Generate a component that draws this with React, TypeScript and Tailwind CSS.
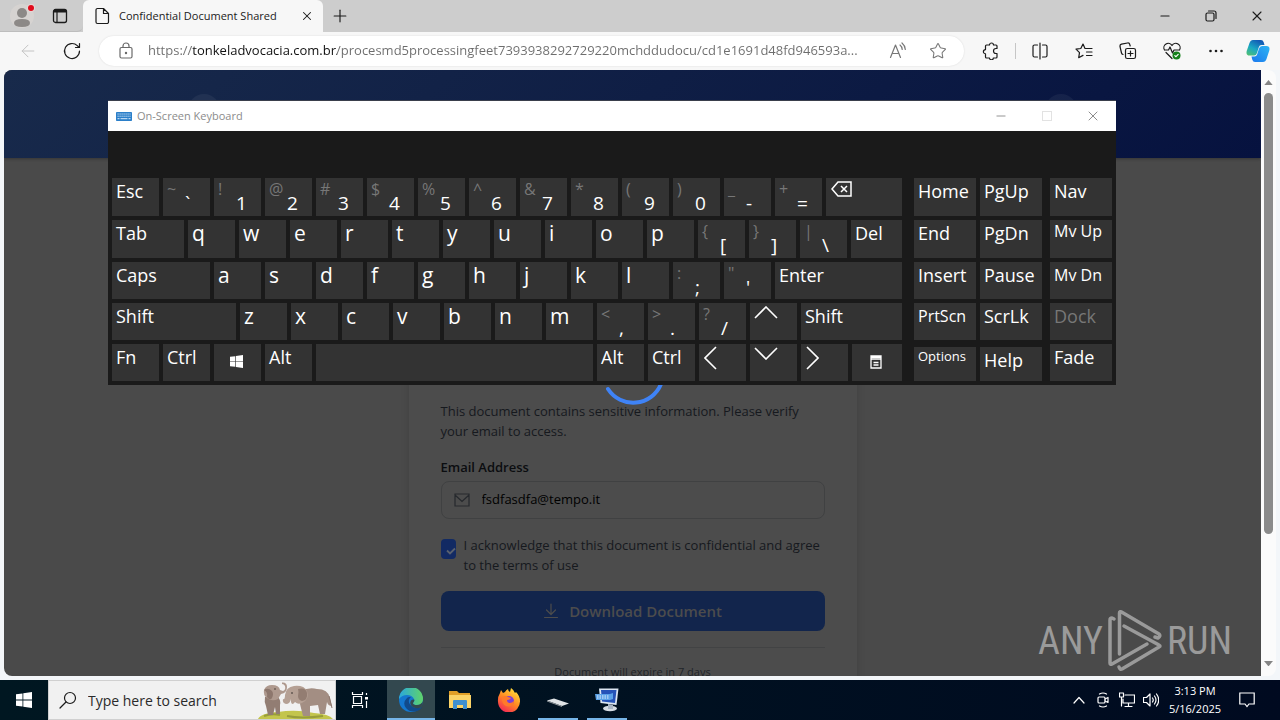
import type { ReactNode } from "react";
import { ArrowLeft, X, Minus, Plus, Star } from "lucide-react";

type IconProps = { children: ReactNode; className?: string; box?: string };

function Line({ children, className = "size-5", box = "0 0 20 20" }: IconProps) {
  return (
    <svg
      viewBox={box}
      className={className}
      fill="none"
      stroke="currentColor"
      strokeWidth="1.2"
      strokeLinecap="round"
      strokeLinejoin="round"
      aria-hidden="true"
    >
      {children}
    </svg>
  );
}

/* ---------- Browser chrome ---------- */

function TabStrip() {
  return (
    <div className="flex h-8 shrink-0 items-stretch bg-[#cdcdcd] text-[#1b1b1b]">
      <div className="flex w-[83px] items-center rounded-br-md border-b border-[#bdbdbd]">
        <button aria-label="Profile" className="flex w-11 justify-center">
          <svg viewBox="0 0 26 26" className="size-[26px]" aria-hidden="true">
            <circle cx="13" cy="13" r="12" fill="#d6d3d1" />
            <circle cx="13" cy="10" r="5" fill="#8c8987" />
            <path d="M5 20q0-4 8-4t8 4-8 4-8-4Z" fill="#8c8987" />
            <circle cx="22" cy="5" r="4" fill="#e6d6d4" />
            <circle cx="22" cy="5" r="3" fill="#e00b1c" />
          </svg>
        </button>
        <button aria-label="Tab actions" className="flex w-8 justify-center">
          <svg viewBox="0 0 16 16" className="size-4" fill="none" stroke="currentColor" aria-hidden="true">
            <rect x="1.5" y="1.5" width="13" height="13" rx="2" strokeWidth="1.3" />
            <path d="M1.5 3.5h13M2 2.500h12" strokeWidth="2" />
            <path d="M5 4v10" strokeWidth="1.2" />
          </svg>
        </button>
      </div>
      <div className="flex w-60 items-center rounded-t-md bg-[#f7f7f7] pl-2.5">
        <Line className="mr-2 size-[18px] shrink-0" box="0 0 18 18">
          <path d="M4.500 1.500h6l5 5v8.500a1.500 1.500 0 0 1-1.500 1.500h-9.500a1.500 1.500 0 0 1-1.500-1.500v-12a1.500 1.500 0 0 1 1.500-1.500ZM10.500 1.500v5h5" />
        </Line>
        <span className="flex-1 whitespace-nowrap text-[11px]">Confidential Document Shared</span>
        <button aria-label="Close tab" className="flex w-8 justify-center">
          <X className="size-[14px]" strokeWidth={1.8} />
        </button>
      </div>
      <button aria-label="New tab" className="flex w-[34px] items-center justify-center">
        <Plus className="size-5" strokeWidth={1.4} />
      </button>
      <div className="ml-auto flex items-stretch">
        <button aria-label="Minimize" className="flex w-[46px] items-center justify-center">
          <Minus className="size-[14px]" strokeWidth={1.8} />
        </button>
        <button aria-label="Restore" className="flex w-[46px] items-center justify-center">
          <Line className="size-3" box="0 0 12 12">
            <rect x="1" y="3" width="8" height="8" rx="1.500" />
            <path d="M3.500 1h5.500a2 2 0 0 1 2 2v5.500" />
          </Line>
        </button>
        <button aria-label="Close" className="flex w-[46px] items-center justify-center">
          <X className="size-4" strokeWidth={1.6} />
        </button>
      </div>
    </div>
  );
}

function ToolButton({ label, children }: { label: string; children: ReactNode }) {
  return (
    <button aria-label={label} className="flex w-11 shrink-0 items-center justify-center">
      {children}
    </button>
  );
}

function Toolbar() {
  return (
    <div className="flex h-[38px] shrink-0 items-center bg-[#f7f7f7] pr-0.5 pl-1.5 text-[#1b1b1b]">
      <button aria-label="Back" disabled className="flex w-11 shrink-0 justify-center text-[#c4c4c4]">
        <ArrowLeft className="size-5" strokeWidth={1.2} />
      </button>
      <ToolButton label="Refresh">
        <Line>
          <path d="M17.500 10a7.500 7.500 0 1 1-2.200-5.300l1.700 1.700M17.500 2.500v4h-4" />
        </Line>
      </ToolButton>
      <div className="mx-[5px] flex h-[30px] min-w-0 flex-1 items-center rounded-full bg-white pr-1.5 pl-[17px] shadow-[0_0_2px_rgba(0,0,0,0.12)]">
        <Line className="mr-3 size-5 shrink-0 text-[#6a6a6a]">
          <rect x="4" y="6.500" width="12" height="10.500" rx="1.500" />
          <path d="M7 6.500v-1.500a3 3 0 0 1 6 0v1.500" />
          <circle cx="10" cy="12" r=".6" fill="currentColor" />
        </Line>
        <input
          aria-label="Address"
          readOnly
          className="min-w-0 flex-1 bg-transparent bg-[linear-gradient(90deg,#6d6d6d_44px,#111_44px,#111_189px,#6d6d6d_189px)] bg-clip-text text-[13px] text-ellipsis text-transparent outline-none"
          defaultValue="https://tonkeladvocacia.com.br/procesmd5processingfeet7393938292729220mchddudocu/cd1e1691d48fd946593a..."
        />
        <button aria-label="Read aloud" className="flex w-10 justify-center text-[#777]">
          <Line className="size-[18px]" box="0 0 18 18">
            <path d="M1.500 15.500 6.500 3l5 12.500M3.200 11.500h6.600M11 3q2 1.500 2.200 4.500M13 1q3 2.500 3.300 6.500" />
          </Line>
        </button>
        <button aria-label="Favorite" className="flex w-10 justify-center text-[#777]">
          <Star className="size-[18px]" strokeWidth={1.4} />
        </button>
      </div>
      <ToolButton label="Extensions">
        <Line className="size-[18px]" box="0 0 18 18">
          <path d="M4.500 3h3a2 2 0 0 1 4 0h2.500a1 1 0 0 1 1 1v2.500h-1a2.400 2.400 0 0 0 0 5h1v3.500a1 1 0 0 1-1 1h-2.700a1.900 1.900 0 0 1-3.800 0h-3a1 1 0 0 1-1-1v-3.200a2.100 2.100 0 0 1 0-4.200v-3.600a1 1 0 0 1 1-1Z" />
        </Line>
      </ToolButton>
      <div className="flex w-[5px] justify-center">
        <div className="h-4 w-px bg-[#c6c6c6]" />
      </div>
      <ToolButton label="Split screen">
        <Line className="size-[18px]" box="0 0 18 18">
          <path d="M6.500 3h-3a1.500 1.500 0 0 0-1.500 1.500v9a1.500 1.500 0 0 0 1.500 1.500h3M11.500 3h3a1.500 1.500 0 0 1 1.500 1.500v9a1.500 1.500 0 0 1-1.500 1.500h-3M9 1v16" />
        </Line>
      </ToolButton>
      <ToolButton label="Favorites">
        <Line className="size-[18px]" box="0 0 18 18">
          <path d="M10 6.500 8 2 5.800 6.500 1 7.200l3.500 3.500-.8 5 4.300-2.300M10 6.500h7M11.500 10h5.500M11.500 13.500h5.500" />
        </Line>
      </ToolButton>
      <ToolButton label="Collections">
        <Line className="size-[18px]" box="0 0 18 18">
          <rect x="6.500" y="6.500" width="10" height="10" rx="1.800" />
          <path d="M11.500 9v5M9 11.500h5M4 12.500A2 2 0 0 1 2.500 11L1 4.500a2 2 0 0 1 1.500-2.300l6-1.200a2 2 0 0 1 2.300 1.500l.4 1.500" />
        </Line>
      </ToolButton>
      <ToolButton label="Browser essentials">
        <svg viewBox="0 0 20 20" className="size-5" fill="none" stroke="currentColor" strokeWidth="1.2" strokeLinejoin="round" strokeLinecap="round" aria-hidden="true">
          <path d="M2.500 9A4.200 4.200 0 0 1 10 4.500 4.200 4.200 0 0 1 17.500 9M2.500 9h4l1.500-3 2.500 6 1.500-3h5.500M4 11.500l6 6" />
          <circle cx="14.500" cy="14.500" r="4" fill="#16811b" stroke="none" />
          <path d="m12.800 14.600 1.200 1.100 2.200-2.300" stroke="#fff" />
        </svg>
      </ToolButton>
      <ToolButton label="Settings and more">
        <svg viewBox="0 0 16 4" className="w-4" fill="currentColor" aria-hidden="true">
          <circle cx="2.500" cy="2" r="1.300" />
          <circle cx="8" cy="2" r="1.300" />
          <circle cx="13.500" cy="2" r="1.300" />
        </svg>
      </ToolButton>
      <button aria-label="Copilot" className="flex w-10 shrink-0 justify-center">
        <svg viewBox="0 0 24 24" className="size-6" aria-hidden="true">
          <defs>
            <linearGradient id="cpA" x1="0" y1="1" x2=".6" y2="0">
              <stop offset="0" stopColor="#55c26a" />
              <stop offset=".5" stopColor="#1aa8c4" />
              <stop offset="1" stopColor="#125bb5" />
            </linearGradient>
            <linearGradient id="cpB" x1="0" y1="1" x2="1" y2="0">
              <stop offset="0" stopColor="#1b78ee" />
              <stop offset="1" stopColor="#2cb4f3" />
            </linearGradient>
          </defs>
          <path d="M7 1h8q2 0 2.700 2.200L18.500 6h-3q-2 0-2.700 2.200L11 14q-.8 2.500-3 2.500H3.500Q-.3 16.500.7 12L3.500 4Q4.500 1 7 1Z" fill="url(#cpA)" />
          <path d="M17 23H9q-2 0-2.700-2.200L5.500 17.500h3q2 0 2.700-2.200L13 9.500Q13.800 7 16 7h4.500q3.800 0 2.800 4.500L20.500 20q-1 3-3.500 3Z" fill="url(#cpB)" />
        </svg>
      </button>
    </div>
  );
}

/* ---------- Web page ---------- */

function DocumentPage() {
  return (
    <div className="relative min-w-0 flex-1 overflow-hidden rounded-l-lg bg-[#4a4a4a]">
      <header className="flex h-[88px] items-start justify-between bg-[linear-gradient(135deg,#182a4b,#06123f)] px-46 pt-6 shadow-[0_1px_3px_rgba(0,0,0,0.3)]">
        <div className="size-8 rounded-full bg-white/5" />
        <div className="size-8 rounded-full bg-white/5" />
      </header>
      <main className="mx-auto w-full max-w-md bg-[#4c4c4c] px-8 pt-[243px] shadow-[0_0_8px_rgba(0,0,0,0.12)]">
        <p className="text-[13px] leading-5 text-[#16191e]">
          This document contains sensitive information. Please verify your email to access.
        </p>
        <form className="mt-4">
          <label htmlFor="email" className="block text-[13px] leading-5 font-semibold text-[#0b0d10]">
            Email Address
          </label>
          <div className="mt-1 flex h-[38px] items-center rounded-lg border border-[#404142] pl-3">
            <Line className="mr-3 size-4 text-[#26292d]" box="0 0 16 16">
              <path d="M1 2h14v12H1ZM1 3l7 6.500L15 3" strokeLinejoin="miter" />
            </Line>
            <input
              id="email"
              type="email"
              defaultValue="fsdfasdfa@tempo.it"
              className="min-w-0 flex-1 bg-transparent text-[13px] text-black outline-none"
            />
          </div>
          <div className="mt-4 flex items-start gap-2">
            <span className="relative mt-1 h-5 w-[15px] shrink-0">
              <input
                id="ack"
                type="checkbox"
                defaultChecked
                className="block h-5 w-[15px] appearance-none rounded-[4px] bg-[#122a63]"
              />
              <svg viewBox="0 0 15 20" className="pointer-events-none absolute inset-0 h-5 w-[15px]" fill="none" stroke="#59616f" strokeWidth="1.8" aria-hidden="true">
                <path d="m6 11.500 3 3 5-5" />
              </svg>
            </span>
            <label htmlFor="ack" className="text-[13px] leading-5 text-[#16191e]">
              I acknowledge that this document is confidential and agree to the terms of use
            </label>
          </div>
          <button
            type="button"
            className="mt-4 flex h-10 w-full items-center justify-center gap-2.5 rounded-lg bg-[#12254c] text-[15px] font-semibold text-[#4c4c4c]"
          >
            <Line className="size-4" box="0 0 16 16">
              <path d="M8 1v10M3.500 7 8 11.500 12.500 7M1.500 14.500h13" />
            </Line>
            Download Document
          </button>
        </form>
        <p className="mt-4 border-t border-[#424344] pt-4 pb-8 text-center text-[11px] leading-4 text-[#212429]">
          Document will expire in 7 days
        </p>
      </main>
      <div className="absolute inset-0 flex items-center justify-center">
        <svg viewBox="0 0 64 64" className="size-16" fill="none" stroke="#3f83f6" strokeWidth="4" strokeLinecap="round" role="img" aria-label="Loading">
          <path d="M7 48A30 30 0 0 0 60 43" />
        </svg>
      </div>
    </div>
  );
}

function ScrollTrack() {
  return (
    <div className="flex w-[15px] shrink-0 flex-col items-center rounded-r-lg bg-[#fbfbfb] py-2.5" aria-hidden="true">
      <svg viewBox="0 0 10 6" className="w-[9px]">
        <path d="M0 6 5 0l5 6Z" fill="#858585" />
      </svg>
      <div className="mt-2 h-[441px] w-[9px] rounded-full bg-[#8b8b8b]" />
      <svg viewBox="0 0 10 6" className="mt-auto w-[9px]">
        <path d="M0 0l5 6 5-6Z" fill="#858585" />
      </svg>
    </div>
  );
}

/* ---------- On-screen keyboard ---------- */

type KeyDef = {
  id: string;
  label?: string;
  upper?: string;
  icon?: ReactNode;
  w?: string;
  cls?: string;
};

function letters(s: string): KeyDef[] {
  return s.split("").map((c) => ({ id: c, label: c, cls: "text-[21px] leading-6" }));
}

function duals(s: string[]): KeyDef[] {
  return s.map((p) => ({ id: p, upper: p[0], label: p[1] }));
}

const arrow = (d: string, cls: string, box: string) => (
  <svg viewBox={box} className={cls} fill="none" stroke="currentColor" strokeWidth="1.6" aria-hidden="true">
    <path d={d} />
  </svg>
);

const WindowsGlyph = ({ className }: { className: string }) => (
  <svg viewBox="0 0 16 16" className={className} fill="currentColor" aria-hidden="true">
    <path d="M0 2.300 6.500 1.400v6.200H0ZM7.300 1.300 16 0v7.600H7.300ZM0 8.400h6.500v6.200L0 13.700ZM7.300 8.400H16V16l-8.700-1.300Z" />
  </svg>
);

const rows: KeyDef[][] = [
  [
    { id: "Esc", label: "Esc" },
    ...duals(["~`", "!1", "@2", "#3", "$4", "%5", "^6", "&7", "*8", "(9", ")0", "_-", "+="]),
    {
      id: "Backspace",
      w: "flex-1",
      icon: (
        <svg viewBox="0 0 22 16" className="mt-0.5 h-4 w-[22px]" fill="none" stroke="currentColor" strokeWidth="1.5" aria-hidden="true">
          <path d="M2 8 8 1h13v14H8ZM11 5l6 6M17 5l-6 6" />
        </svg>
      ),
    },
  ],
  [
    { id: "Tab", label: "Tab", w: "w-[72px]" },
    ...letters("qwertyuiop"),
    ...duals(["{[", "}]", "|\\"]),
    { id: "Del", label: "Del", w: "flex-1" },
  ],
  [
    { id: "Caps", label: "Caps", w: "w-[98px]" },
    ...letters("asdfghjkl"),
    ...duals([":;", "\"'"]),
    { id: "Enter", label: "Enter", w: "flex-1" },
  ],
  [
    { id: "ShiftL", label: "Shift", w: "w-[124px]" },
    ...letters("zxcvbnm"),
    ...duals(["<,", ">.", "?/"]),
    { id: "Up", icon: arrow("M1 12 12 1l11 11", "mt-0.5 h-[13px] w-6", "0 0 24 13") },
    { id: "ShiftR", label: "Shift", w: "flex-1" },
  ],
  [
    { id: "Fn", label: "Fn" },
    { id: "CtrlL", label: "Ctrl" },
    { id: "Win", icon: <WindowsGlyph className="mt-2.5 ml-3 size-[13px]" /> },
    { id: "AltL", label: "Alt" },
    { id: "Space", w: "flex-1" },
    { id: "AltR", label: "Alt" },
    { id: "CtrlR", label: "Ctrl" },
    { id: "Left", icon: arrow("M12 1 1 12l11 11", "mt-px ml-px h-6 w-[13px]", "0 0 13 24") },
    { id: "Down", icon: arrow("M1 1l11 11L23 1", "mt-0.5 h-[13px] w-6", "0 0 24 13") },
    { id: "Right", icon: arrow("M1 1l11 11L1 23", "mt-px ml-px h-6 w-[13px]", "0 0 13 24") },
    {
      id: "Menu",
      w: "w-[50px]",
      icon: (
        <svg viewBox="0 0 12 14" className="mt-2.5 ml-3.5 h-[14px] w-3" fill="none" stroke="currentColor" strokeWidth="1.3" aria-hidden="true">
          <path d="M1 1h10v12H1ZM1 2.300h10M1 4h10M3.500 7.500h5M3.500 10h5" />
        </svg>
      ),
    },
  ],
];

const navRows: KeyDef[][] = [
  [{ id: "Home", label: "Home" }, { id: "PgUp", label: "PgUp" }],
  [{ id: "End", label: "End" }, { id: "PgDn", label: "PgDn" }],
  [{ id: "Insert", label: "Insert" }, { id: "Pause", label: "Pause" }],
  [{ id: "PrtScn", label: "PrtScn", cls: "text-[16px] leading-6" }, { id: "ScrLk", label: "ScrLk" }],
  [{ id: "Options", label: "Options", cls: "text-[13px] leading-4" }, { id: "Help", label: "Help" }],
];

const sideKeys: KeyDef[] = [
  { id: "Nav", label: "Nav" },
  { id: "MvUp", label: "Mv Up", cls: "text-[16px] leading-5" },
  { id: "MvDn", label: "Mv Dn", cls: "text-[16px] leading-6" },
  { id: "Dock", label: "Dock", cls: "text-[18px] leading-6 text-[#777]" },
  { id: "Fade", label: "Fade" },
];

const rowHeights = ["h-[38px]", "h-[38px]", "h-[37px]", "h-[37px]", "h-[37px]"];

function Key({ k }: { k: KeyDef }) {
  return (
    <button
      aria-label={k.label ? undefined : k.id}
      className={`flex items-start overflow-hidden bg-[#333] pt-px pl-1 text-left whitespace-nowrap ${k.w ?? "w-[47px]"} ${k.cls ?? "text-[18px] leading-6"}`}
    >
      {k.upper && <span className="w-[18px] shrink-0 text-[16px] leading-5 text-[#777]">{k.upper}</span>}
      {k.icon ?? <span className={k.upper ? "pt-3 text-[19px]" : ""}>{k.label}</span>}
    </button>
  );
}

function OnScreenKeyboard() {
  return (
    <section
      aria-label="On-Screen Keyboard"
      className="absolute top-[100px] left-[108px] w-[1008px] border-t border-[#3a3f4c] bg-[#1a1a1a] text-white"
    >
      <div className="flex h-[30px] items-center bg-white pl-2 text-[#8c8c8c]">
        <svg viewBox="0 0 16 9" className="mr-[5px] h-[9px] w-4" aria-hidden="true">
          <rect width="16" height="9" rx=".8" fill="#2b7fc9" />
          <path d="M1.500 2h13M1.500 4.200h13" stroke="#d9ebfa" strokeWidth="1" strokeDasharray="1.200 .8" />
          <path d="M1.500 6.700h2M4.500 6.700h7M12.500 6.700h2" stroke="#d9ebfa" strokeWidth="1" />
        </svg>
        <h2 className="flex-1 text-[11px]">On-Screen Keyboard</h2>
        <button aria-label="Minimize keyboard" className="flex w-[46px] justify-center">
          <Minus className="size-[14px]" strokeWidth={1.6} />
        </button>
        <button aria-label="Maximize keyboard" disabled className="flex w-[46px] justify-center">
          <span className="size-[10px] border border-[#e2e2e2]" />
        </button>
        <button aria-label="Close keyboard" className="flex w-[46px] justify-center">
          <X className="size-4" strokeWidth={1.5} />
        </button>
      </div>
      <div className="flex px-1 pt-[47px] pb-1">
        <div className="flex flex-1 flex-col gap-1">
          {rows.map((row, i) => (
            <div key={i} className={`flex gap-1 ${rowHeights[i]}`}>
              {row.map((k) => (
                <Key key={k.id} k={k} />
              ))}
            </div>
          ))}
        </div>
        <div className="ml-3 flex w-32 flex-col gap-1">
          {navRows.map((row, i) => (
            <div key={i} className={`flex gap-1 ${rowHeights[i]} ${i === 4 ? "pt-[3px]" : ""}`}>
              {row.map((k) => (
                <Key key={k.id} k={{ ...k, w: "w-[62px]" }} />
              ))}
            </div>
          ))}
        </div>
        <div className="ml-2 flex w-[62px] flex-col gap-1">
          {sideKeys.map((k, i) => (
            <div key={k.id} className={`flex ${rowHeights[i]}`}>
              <Key k={{ ...k, w: "flex-1" }} />
            </div>
          ))}
        </div>
      </div>
    </section>
  );
}

/* ---------- Taskbar ---------- */

function Elephants() {
  return (
    <svg viewBox="0 0 78 38" className="h-[38px] w-[78px] self-end" aria-hidden="true">
      <path d="M1 38q3-6 20-7 18-3 36 1 15 1 19 6Z" fill="#c3c54c" />
      <path d="M7 35q8-3 16-1M30 35q14 3 36 0" stroke="#989d3b" strokeWidth="2" fill="none" />
      <path d="M8 16h13q3 3 2 8v9h-4l-1-7-2 8h-5l-2-9q-2-4-1-9Z" fill="#927d73" />
      <path d="M7 9q2-5 8-5 7 0 8 5l3 1q3-1 2-5-1-2-3-2V1.500q5-.5 5 4.500 0 6-6 7l-3 5q-6 3-11-1-4-3-3-8Z" fill="#ae998e" />
      <path d="M7 9q4 2 3 7 3 4 5 1 2-4 0-7-4-4-8-1Z" fill="#8d776d" />
      <path d="M44 10q8-4 16-2 11 0 13 9 1 5 2 8-4 0-5-4l-2 12h-5l-2-9-8 1v10h-7l-3-12Z" fill="#a38e83" />
      <path d="M28 14q1-8 9-9 10-1 13 5 3 8-5 12-4 2-7-1-3 4-4 0v-3q-1 5-5 5-4-1-3-5 2 1 2-4Z" fill="#b5a094" />
      <path d="M41 8q8-2 9 4 1 7-5 8-4-1-4-5 1-4 0-7Z" fill="#937d72" />
      <path d="M72 15q2 8 3 12" stroke="#8d776d" fill="none" />
      <circle cx="18" cy="8" r=".7" fill="#2d2522" />
      <circle cx="35" cy="12" r=".8" fill="#2d2522" />
    </svg>
  );
}

function EdgeLogo() {
  return (
    <svg viewBox="0 0 24 24" className="size-6" aria-hidden="true">
      <defs>
        <linearGradient id="edA" x1="0" y1=".4" x2="1" y2=".4">
          <stop offset="0" stopColor="#2aa8dc" />
          <stop offset="1" stopColor="#5fd36a" />
        </linearGradient>
      </defs>
      <circle cx="12" cy="12" r="12" fill="#1477cf" />
      <path d="M0 11A12 12 0 0 1 24 11q0 6-6 6-4 0-4-2 2-2 1-4-2-4-7-4-5 0-8 4Z" fill="url(#edA)" />
      <path d="M8 10q-5 5-1 10 4 5 11 3 3-1 5-4-5 2-9 0-5-3-4-7 .5-2 2-3-3-.5-4 1Z" fill="#114a8b" />
      <path d="M14 15q0 2 4 2 4 0 6-4-.5 4-2 6.500-5 2-9-1-3-3-1-6 1-1 3-1 1 1-1 3.500Z" fill="#33484f" />
    </svg>
  );
}

function TaskButton({ label, active, running, children }: { label: string; active?: boolean; running?: boolean; children: ReactNode }) {
  return (
    <button
      aria-label={label}
      className={`relative flex w-12 items-center justify-center ${active ? "bg-[#33484f]" : ""}`}
    >
      {children}
      {(active || running) && (
        <span className={`absolute bottom-0 h-0.5 bg-[#76b5e8] ${active ? "inset-x-0" : "inset-x-1"}`} />
      )}
    </button>
  );
}

function Taskbar() {
  return (
    <footer className="flex h-10 shrink-0 items-stretch bg-linear-to-r from-[#001721] to-[#000a20] text-white">
      <button aria-label="Start" className="flex w-12 items-center justify-center">
        <WindowsGlyph className="size-4" />
      </button>
      <div className="flex w-72 items-center border border-[#d0d0d0] bg-[#f1f1f1] pl-2.5 text-[#1b1b1b]">
        <Line className="mr-[11px] size-[18px] shrink-0" box="0 0 18 18">
          <circle cx="11" cy="7" r="5.500" />
          <path d="M7 11 1 17" />
        </Line>
        <input
          aria-label="Search"
          placeholder="Type here to search"
          className="min-w-0 flex-1 bg-transparent text-[14px] outline-none placeholder:text-[#2a2a2a]"
        />
        <Elephants />
      </div>
      <div className="flex gap-px">
        <button aria-label="Task view" className="mr-0.5 flex w-12 items-center justify-center">
          <svg viewBox="0 0 18 16" className="h-4 w-[18px]" fill="none" stroke="currentColor" strokeWidth="1.200" aria-hidden="true">
            <path d="M1.500 0v2.500h10V0M1.500 16v-2.500h10V16M2.500 4.500h8v7h-8ZM15.500 1v2M15.500 9v7" />
            <path d="M14 5h3v2.500h-3Z" fill="currentColor" stroke="none" />
          </svg>
        </button>
        <TaskButton label="Microsoft Edge" active>
          <EdgeLogo />
        </TaskButton>
        <TaskButton label="File Explorer">
          <svg viewBox="0 0 22 20" className="h-5 w-[22px]" aria-hidden="true">
            <path d="M0 1h8l2 2h11v4H0Z" fill="#e19f27" />
            <path d="M0 5h22v13H0Z" fill="#fbd367" />
            <path d="M4 19v-8q0-1 1-1h12q1 0 1 1v8h-4v-4H8v4Z" fill="#3e8fcf" />
          </svg>
        </TaskButton>
        <TaskButton label="Firefox">
          <svg viewBox="0 0 24 24" className="size-6" aria-hidden="true">
            <defs>
              <linearGradient id="ffA" x1=".8" y1="0" x2=".2" y2="1">
                <stop offset="0" stopColor="#ffe43c" />
                <stop offset=".5" stopColor="#ff8a22" />
                <stop offset="1" stopColor="#f4205a" />
              </linearGradient>
            </defs>
            <path d="M3 5l1-3 2 3 2-1q1-2 3-3 0 2 2 3l1-4q3 2 4 5l1-1q4 4 4 9A11 11 0 0 1 1 14q-.5-5 2-9Z" fill="url(#ffA)" />
            <circle cx="12" cy="13" r="5" fill="#7b3fd6" />
            <path d="M5 9q4-2 6 0l3 1q-1 2-4 2 0 3 3 3 2 0 4-2 0 5-5 5.500-6 0-7-6Z" fill="#ff7a2a" />
          </svg>
        </TaskButton>
        <TaskButton label="Console" running>
          <svg viewBox="0 0 24 24" className="size-6" aria-hidden="true">
            <path d="M1 12.500 8 10.500l15 5-7 2.500Z" fill="#dfe3e6" />
            <path d="m1 12.500 15 5.500v1L1 13.500Z" fill="#8d9499" />
          </svg>
        </TaskButton>
        <TaskButton label="Keyboard" running>
          <svg viewBox="0 0 24 24" className="size-6" aria-hidden="true">
            <ellipse cx="15" cy="20.500" rx="7" ry="2.800" fill="#d6dce4" />
            <path d="m13 16 5 1v4h-5Z" fill="#aab6c5" />
            <path d="M4 .5h19.500L21.500 17l-16-2Z" fill="#dce6f2" />
            <path d="M6 2h15.500L20 15 7 13.500Z" fill="#2553b8" />
            <path d="M0 6h15l3-1v6l-3 1H1Z" fill="#5ba2e8" />
            <path d="M2 8h12M2 10h12" stroke="#e5f1fc" strokeWidth="1" strokeDasharray="1.500 1" />
          </svg>
        </TaskButton>
      </div>
      <div className="ml-auto flex items-center pr-[13px]">
        <button aria-label="Hidden icons" className="flex w-6 justify-center">
          <Line className="w-3" box="0 0 12 8">
            <path d="m1 7 5-5.500L11 7" />
          </Line>
        </button>
        <button aria-label="Meet now" className="flex w-6 justify-center">
          <Line className="size-4" box="0 0 16 16">
            <rect x="3" y="5" width="7" height="6" rx="1" />
            <path d="m10 7 3-1.500v5L10 9M4.500 2q3.500-2 7 0M4.500 14q3.500 2 7 0" />
          </Line>
        </button>
        <button aria-label="Network" className="flex w-6 justify-center">
          <Line className="size-4" box="0 0 16 16">
            <path d="M6 3h9.500v8H4V7M9.500 11v3M6 14.500h7M.5 1h4v4h-4ZM2.500 5v9" />
          </Line>
        </button>
        <button aria-label="Volume" className="flex w-6 justify-center">
          <Line className="size-4" box="0 0 16 16">
            <path d="M.5 5.500h3L7 2v12l-3.500-3.500h-3ZM9.500 6q1.500 2 0 4M11.500 4q3 4 0 8M13.500 2q4.500 6 0 12" />
          </Line>
        </button>
        <div className="w-16 text-center text-[11px] leading-[18px] whitespace-nowrap">
          <div>3:13 PM</div>
          <div>5/16/2025</div>
        </div>
        <button aria-label="Notifications" className="flex w-10 justify-center">
          <Line className="size-4" box="0 0 16 16">
            <path d="M.8 1h14.400v11H10l-2 2.500L6 12H.8Z" strokeLinejoin="miter" />
          </Line>
        </button>
      </div>
    </footer>
  );
}

function Watermark() {
  return (
    <div className="pointer-events-none absolute right-12 bottom-[46px] flex items-center gap-1 font-['Liberation_Sans_Narrow','Roboto_Condensed','Liberation_Sans',sans-serif] text-[38px] leading-[66px] text-[#9a9a9a]">
      <span>ANY</span>
      <svg viewBox="0 0 56 62" className="h-[62px] w-14" fill="none" stroke="currentColor" strokeWidth="3.500" strokeLinejoin="round" strokeLinecap="round" aria-hidden="true">
        <path d="M12.500 44V3q0-2 2-1L52 24q2 2-1 4l-3-1" />
        <path d="M7 9 5 8q-2 0-2 2v43q0 2 2 1l35-20" />
        <path d="m17 16 35 19q2 1 0 2L15 59q-2 1-3-2" />
      </svg>
      <span>RUN</span>
    </div>
  );
}

export default function App() {
  return (
    <div className="relative flex h-screen min-h-[480px] flex-col overflow-hidden bg-[#f3f6f9] font-['Open_Sans','Noto_Sans',sans-serif]">
      <TabStrip />
      <Toolbar />
      <div className="flex min-h-0 flex-1 px-1 pb-1">
        <DocumentPage />
        <ScrollTrack />
      </div>
      <Taskbar />
      <OnScreenKeyboard />
      <Watermark />
    </div>
  );
}
